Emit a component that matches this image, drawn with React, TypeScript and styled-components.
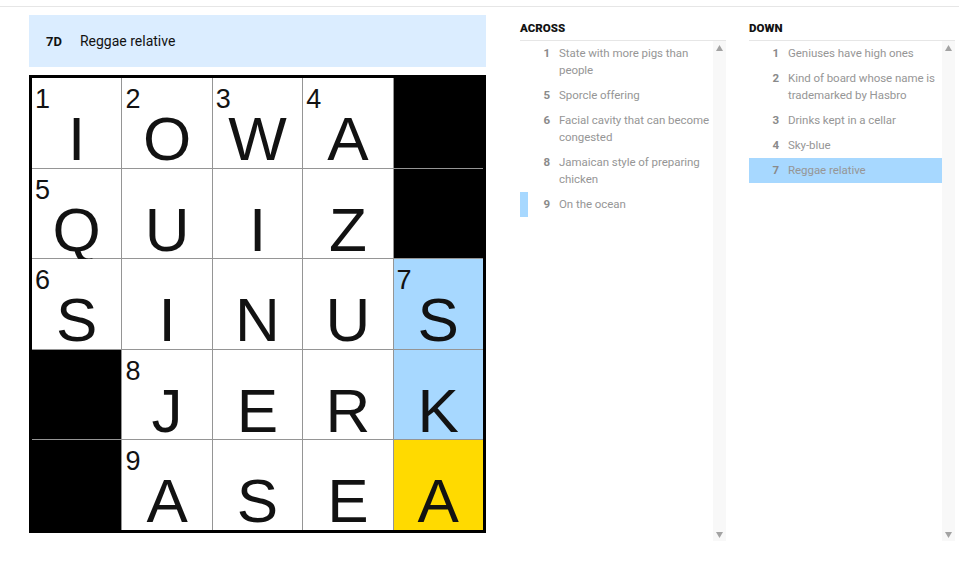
import React from 'react'
import styled, { createGlobalStyle } from 'styled-components'

const GlobalStyle = createGlobalStyle`
  html, body {
    margin: 0;
    padding: 0;
    background: #fff;
  }
  body {
    font-family: Roboto, 'Liberation Sans', sans-serif;
    color: #121212;
  }
`

type Clue = { num: number; text: string }

const ACROSS: Clue[] = [
  { num: 1, text: 'State with more pigs than people' },
  { num: 5, text: 'Sporcle offering' },
  { num: 6, text: 'Facial cavity that can become congested' },
  { num: 8, text: 'Jamaican style of preparing chicken' },
  { num: 9, text: 'On the ocean' }
]

const DOWN: Clue[] = [
  { num: 1, text: 'Geniuses have high ones' },
  { num: 2, text: 'Kind of board whose name is trademarked by Hasbro' },
  { num: 3, text: 'Drinks kept in a cellar' },
  { num: 4, text: 'Sky-blue' },
  { num: 7, text: 'Reggae relative' }
]

// '#' marks a block
const ROWS = ['IOWA#', 'QUIZ#', 'SINUS', '#JERK', '#ASEA']

const NUMBERS: Record<string, number> = {
  '0-0': 1,
  '0-1': 2,
  '0-2': 3,
  '0-3': 4,
  '1-0': 5,
  '2-0': 6,
  '2-4': 7,
  '3-1': 8,
  '4-1': 9
}

// current word is 7D, cursor on its last square
const WORD = ['2-4', '3-4']
const CURSOR = '4-4'

type CellState = 'block' | 'word' | 'cursor' | 'plain'

const TopBar = styled.div`
  height: 6px;
  border-bottom: 1px solid #e6e6e6;
`

const Layout = styled.div`
  display: flex;
  align-items: flex-start;
  padding: 8px 0 0 29px;
`

const Board = styled.div`
  width: 457px;
  display: flex;
  flex-direction: column;
  gap: 8px;
`

const ClueBar = styled.div`
  height: 52px;
  background: #dbedff;
  display: flex;
  align-items: center;
  padding-left: 17px;
  gap: 18px;
  font-size: 14px;
`

const ClueBarLabel = styled.span`
  font-weight: 700;
  font-size: 13px;
`

const Grid = styled.div`
  display: grid;
  grid-template-columns: repeat(5, 1fr);
  grid-template-rows: repeat(5, 1fr);
  gap: 1px;
  height: 452px;
  background: #959595;
  border: 3px solid #000;
`

const cellColors: Record<CellState, string> = {
  block: '#000',
  word: '#a7d8ff',
  cursor: '#ffda00',
  plain: '#fff'
}

const Cell = styled.div<{ $state: CellState }>`
  position: relative;
  background: ${({ $state }) => cellColors[$state]};
  display: flex;
  justify-content: center;
  align-items: flex-end;
  padding-bottom: 4px;
  font-family: 'Liberation Sans', Arial, sans-serif;
`

const CellNumber = styled.span`
  position: absolute;
  top: 8px;
  left: 3px;
  font-size: 27px;
  line-height: 1;
`

const Letter = styled.span`
  font-size: 62px;
  line-height: 0.8;
`

const Lists = styled.div`
  display: flex;
  gap: 23px;
  margin-left: 34px;
  margin-top: 2px;
`

const ListColumn = styled.section`
  width: 206px;
  display: flex;
  flex-direction: column;
`

const ListTitle = styled.h3`
  margin: 0;
  height: 23px;
  font-size: 11.5px;
  font-weight: 900;
  line-height: 22px;
  border-bottom: 1px solid #e6e6e6;
`

const ListBody = styled.div`
  display: flex;
  height: 500px;
`

const Items = styled.ol`
  flex: 1;
  margin: 0;
  padding: 0;
  list-style: none;
`

const Item = styled.li<{ $active?: boolean; $cross?: boolean }>`
  display: flex;
  gap: 9px;
  padding: 4px 0;
  border-left: 8px solid ${({ $cross }) => ($cross ? '#a7d8ff' : 'transparent')};
  background: ${({ $active }) => ($active ? '#a7d8ff' : 'transparent')};
  font-size: 11.5px;
  line-height: 17px;
`

const ItemNum = styled.span`
  flex: 0 0 22px;
  text-align: right;
  font-weight: 700;
  color: #8a8a8a;
`

const ItemText = styled.span`
  color: #969696;
  letter-spacing: -0.05px;
`

const Track = styled.div`
  width: 13px;
  background: #f8f8f8;
  display: flex;
  flex-direction: column;
  justify-content: space-between;
  align-items: center;
  padding: 4px 0 3px;
`

function Arrow({ down }: { down?: boolean }) {
  return (
    <svg width="7" height="6" viewBox="0 0 7 6">
      <path d={down ? 'M0 0H7L3.5 6Z' : 'M0 6H7L3.5 0Z'} fill="#a3a3a3" />
    </svg>
  )
}

function ClueList({
  title,
  clues,
  active,
  cross
}: {
  title: string
  clues: Clue[]
  active?: number
  cross?: number
}) {
  return (
    <ListColumn>
      <ListTitle>{title}</ListTitle>
      <ListBody>
        <Items>
          {clues.map(c => (
            <Item key={c.num} $active={c.num === active} $cross={c.num === cross}>
              <ItemNum>{c.num}</ItemNum>
              <ItemText>{c.text}</ItemText>
            </Item>
          ))}
        </Items>
        <Track>
          <Arrow />
          <Arrow down />
        </Track>
      </ListBody>
    </ListColumn>
  )
}

function cellState(key: string, ch: string): CellState {
  if (ch === '#') return 'block'
  if (key === CURSOR) return 'cursor'
  if (WORD.includes(key)) return 'word'
  return 'plain'
}

export default function App() {
  return (
    <>
      <GlobalStyle />
      <TopBar />
      <Layout>
        <Board>
          <ClueBar>
            <ClueBarLabel>7D</ClueBarLabel>
            <span>Reggae relative</span>
          </ClueBar>
          <Grid>
            {ROWS.map((row, r) =>
              row.split('').map((ch, c) => {
                const key = `${r}-${c}`
                return (
                  <Cell key={key} $state={cellState(key, ch)}>
                    {NUMBERS[key] && <CellNumber>{NUMBERS[key]}</CellNumber>}
                    {ch !== '#' && <Letter>{ch}</Letter>}
                  </Cell>
                )
              })
            )}
          </Grid>
        </Board>
        <Lists>
          <ClueList title="ACROSS" clues={ACROSS} cross={9} />
          <ClueList title="DOWN" clues={DOWN} active={7} />
        </Lists>
      </Layout>
    </>
  )
}
